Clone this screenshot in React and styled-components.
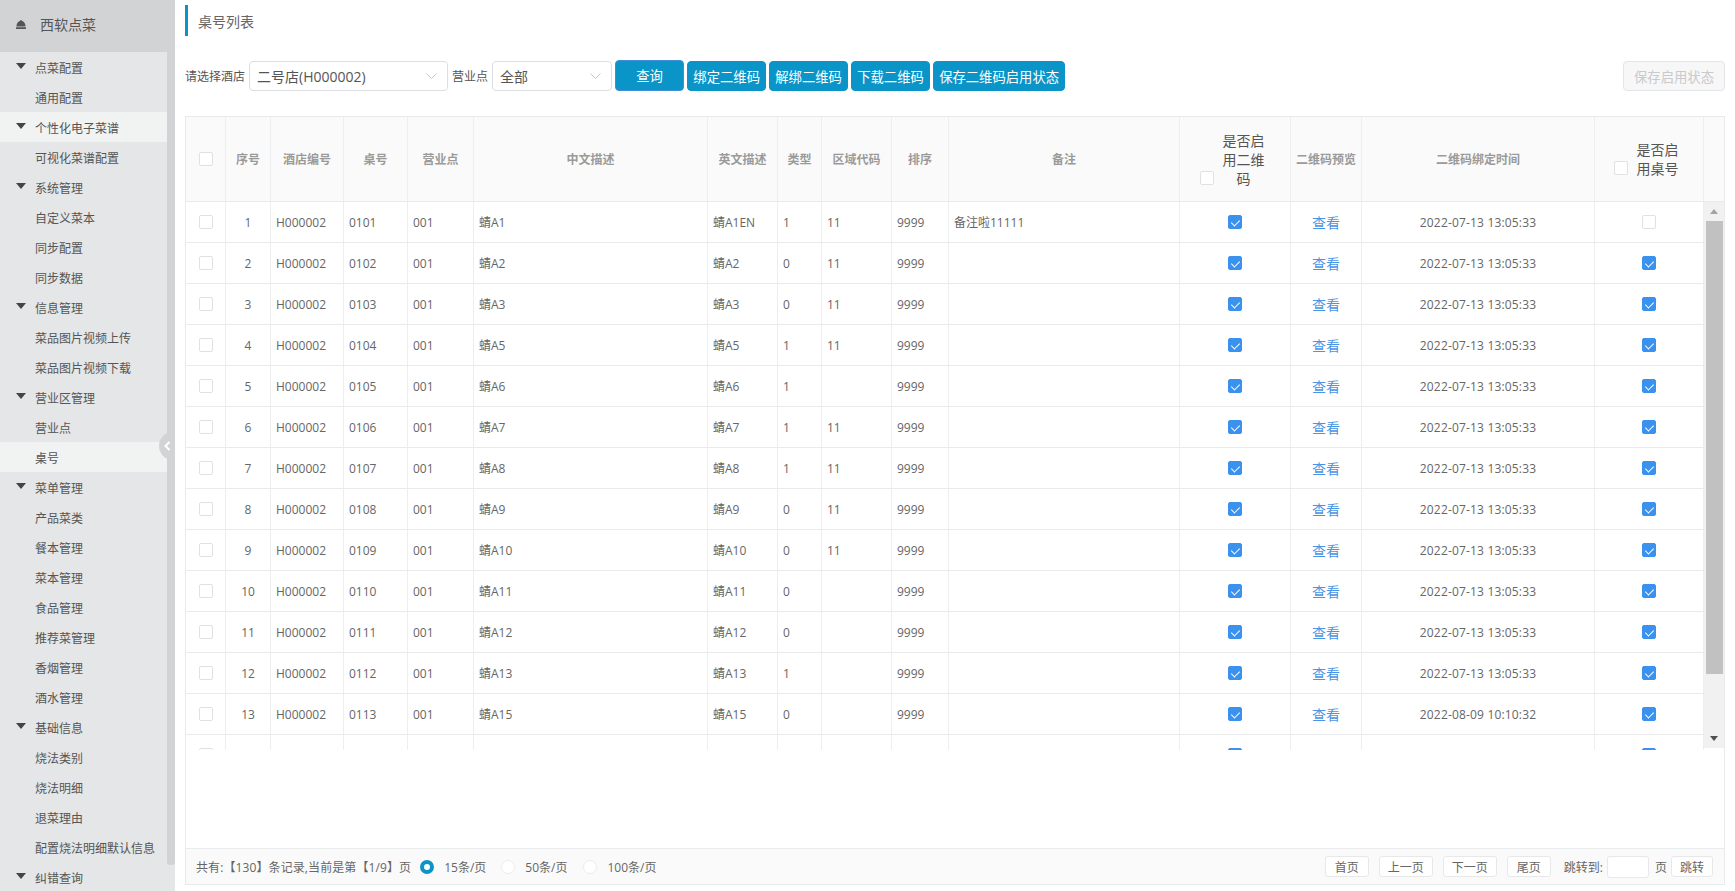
import React from "react";
import styled, { createGlobalStyle } from "styled-components";

const GlobalStyle = createGlobalStyle`
  html, body {
    margin: 0;
    padding: 0;
    background: #fff;
  }
  body {
    font-family: "Open Sans", "Noto Sans CJK SC", sans-serif;
    font-size: 12px;
    color: #666;
  }
  * {
    box-sizing: border-box;
  }
`;

const COLUMNS = "40px 45px 73px 64px 66px 234px 70px 44px 70px 57px 231px 111px 71px 233px 109px";
const BLUE = "#0a94c8";

const Page = styled.div`
  display: flex;
  width: 1735px;
  height: 891px;
  overflow: hidden;
`;

const Sidebar = styled.aside`
  position: relative;
  flex: none;
  width: 175px;
  background: #e4e6e7;
`;

const Brand = styled.div`
  display: flex;
  align-items: center;
  gap: 14px;
  height: 52px;
  padding: 0 0 4px 16px;
  background: #d2d3d5;
  font-size: 14px;
  color: #555;
`;

const MenuWrap = styled.div`
  display: flex;
  align-items: flex-start;
`;

const Menu = styled.ul`
  flex: none;
  width: 167px;
  margin: 0;
  padding: 0;
  list-style: none;
`;

const MenuThumb = styled.div`
  flex: none;
  width: 8px;
  height: 813px;
  background: #d2d3d5;
  border-radius: 0 0 3px 3px;
`;

const MenuItem = styled.li`
  display: flex;
  align-items: center;
  height: 30px;
  padding: 1px 0 0 ${(props) => (props.$group ? "16px" : "35px")};
  background: ${(props) => (props.$active ? "#f1f2f2" : "transparent")};
  color: #555;
  white-space: nowrap;
`;

const Caret = styled.span`
  flex: none;
  width: 0;
  height: 0;
  margin: -3px 9px 0 0;
  border-left: 5px solid transparent;
  border-right: 5px solid transparent;
  border-top: 6px solid #444;
`;

const Collapse = styled.div`
  position: absolute;
  left: 159px;
  top: 432px;
  display: flex;
  align-items: center;
  justify-content: center;
  width: 16px;
  height: 28px;
  background: #d2d3d5;
  border-radius: 14px 0 0 14px;
`;

const Main = styled.main`
  flex: 1;
  display: flex;
  flex-direction: column;
  min-width: 0;
  padding: 5px 10px 6px;
`;

const Title = styled.div`
  display: flex;
  align-items: center;
  height: 31px;
  padding-left: 10px;
  border-left: 3px solid ${BLUE};
  font-size: 14px;
  color: #666;
`;

const Toolbar = styled.div`
  display: flex;
  align-items: center;
  height: 30px;
  margin: 25px 0;
`;

const Label = styled.span`
  flex: none;
  margin-right: ${(props) => props.$gap}px;
  color: #555;
  white-space: nowrap;
`;

const Select = styled.div`
  flex: none;
  display: flex;
  align-items: center;
  justify-content: space-between;
  width: ${(props) => props.$width}px;
  height: 30px;
  margin-right: ${(props) => props.$gap}px;
  padding: 0 10px 1px 7px;
  border: 1px solid #dcdee2;
  border-radius: 4px;
  font-size: 14px;
  color: #555;
`;

const Button = styled.button`
  flex: none;
  height: 30px;
  margin-right: 3.3px;
  padding: 0 5px;
  width: ${(props) => (props.$width ? `${props.$width}px` : "auto")};
  border: 1px solid ${BLUE};
  border-radius: 4px;
  background: ${BLUE};
  color: #fff;
  font-family: inherit;
  font-size: 13.33px;
  white-space: nowrap;
`;

const QueryButton = styled(Button)`
  height: 31px;
  margin-top: -1px;
  border-color: #3d8fd8;
`;

const DisabledButton = styled(Button)`
  margin: 0 0 0 auto;
  padding: 0 10px;
  border-color: #e3e5e8;
  background: #f7f7f7;
  color: #c8cacd;
`;

const TableBox = styled.section`
  flex: 1;
  display: flex;
  flex-direction: column;
  min-height: 0;
  border: 1px solid #e8eaec;
`;

const HeadRow = styled.div`
  flex: none;
  display: grid;
  grid-template-columns: ${COLUMNS} 1fr;
  height: 85px;
  border-bottom: 1px solid #e8eaec;
  background: #fafafa;
`;

const HeadCell = styled.div`
  display: flex;
  align-items: center;
  justify-content: center;
  border-right: 1px solid #eceef0;
  font-weight: 700;
  color: #9a9a9a;
`;

const HeadCheckCell = styled.div`
  display: flex;
  align-items: flex-end;
  justify-content: center;
  gap: 9px;
  padding: 0 6px 0 0;
  border-right: 1px solid #eceef0;
`;

const HeadStack = styled.div`
  display: flex;
  align-items: flex-end;
  gap: 9px;
  margin: auto 0;
`;

const HeadText = styled.div`
  width: 42px;
  font-size: 14px;
  line-height: 19px;
  text-align: center;
  color: #555;
`;

const HeadCheck = styled.div`
  margin-bottom: 3px;
  line-height: 0;
`;

const Body = styled.div`
  flex: none;
  display: flex;
  height: 548px;
  overflow: hidden;
`;

const Rows = styled.div`
  flex: none;
  width: 1518px;
`;

const Row = styled.div`
  display: grid;
  grid-template-columns: ${COLUMNS};
  height: 41px;
  border-bottom: 1px solid #e8eaec;
`;

const Cell = styled.div`
  display: flex;
  align-items: center;
  justify-content: ${(props) => (props.$center ? "center" : "flex-start")};
  padding: ${(props) => (props.$center ? "0" : "0 0 0 5px")};
  border-right: 1px solid #eceef0;
  color: #666;
  white-space: nowrap;
`;

const DateText = styled.span`
  letter-spacing: 0.17px;
`;

const LinkText = styled.a`
  font-size: 14px;
  color: #4a94e4;
`;

const Checkbox = styled.span`
  position: relative;
  display: inline-block;
  width: 14px;
  height: 14px;
  border: 1px solid ${(props) => (props.$checked ? "#3b92ee" : "#dfe1e5")};
  border-radius: 2px;
  background: ${(props) => (props.$checked ? "#3b92ee" : "#fff")};

  &::after {
    content: "";
    display: ${(props) => (props.$checked ? "block" : "none")};
    position: absolute;
    left: 4px;
    top: 1.5px;
    width: 4px;
    height: 7px;
    border: solid #fff;
    border-width: 0 1px 1px 0;
    transform: rotate(45deg);
  }
`;

const ScrollTrack = styled.div`
  flex: none;
  position: relative;
  display: flex;
  flex-direction: column;
  align-items: center;
  width: 20px;
  height: 546px;
  background: #f1f1f1;
`;

const ScrollArrow = styled.span`
  flex: none;
  width: 0;
  height: 0;
  margin: ${(props) => (props.$down ? "auto 0 7px" : "7px 0 7px")};
  border-left: 4.5px solid transparent;
  border-right: 4.5px solid transparent;
  ${(props) =>
    props.$down ? "border-top: 5px solid #505050;" : "border-bottom: 5px solid #a3a3a3;"}
`;

const ScrollThumb = styled.div`
  flex: none;
  width: 17px;
  height: 453px;
  margin-left: 1px;
  background: #c1c1c1;
`;

const Spacer = styled.div`
  flex: 1;
`;

const Footer = styled.footer`
  flex: none;
  display: flex;
  align-items: center;
  height: 36px;
  padding: 0 11px 0 10px;
  border-top: 1px solid #e8eaec;
  background: #fafafa;
  white-space: nowrap;
`;

const FooterText = styled.span`
  letter-spacing: 0.1px;
`;

const RadioGroup = styled.label`
  display: flex;
  align-items: center;
  gap: 10px;
  margin-left: ${(props) => props.$gap}px;
`;

const Radio = styled.span`
  flex: none;
  width: 14px;
  height: 14px;
  border-radius: 50%;
  border: ${(props) => (props.$checked ? `4px solid ${BLUE}` : "1px solid #ececec")};
  background: #fff;
`;

const Pager = styled.div`
  display: flex;
  align-items: center;
  gap: 10px;
  margin-left: auto;
`;

const PageButton = styled.button`
  flex: none;
  width: ${(props) => props.$width}px;
  height: 21px;
  padding: 0;
  border: 1px solid #e8e8e8;
  border-radius: 3px;
  background: #fff;
  color: #666;
  font-family: inherit;
  font-size: 12px;
`;

const JumpGroup = styled.div`
  display: flex;
  align-items: center;
  gap: 4px;
  margin-left: 3px;
`;

const JumpInput = styled.input`
  width: 42px;
  height: 22px;
  margin-right: 2px;
  border: 1px solid #e8e8e8;
  border-radius: 3px;
  background: #fff;
`;

const MENU = [
  { label: "点菜配置", group: true },
  { label: "通用配置" },
  { label: "个性化电子菜谱", group: true, active: true },
  { label: "可视化菜谱配置" },
  { label: "系统管理", group: true },
  { label: "自定义菜本" },
  { label: "同步配置" },
  { label: "同步数据" },
  { label: "信息管理", group: true },
  { label: "菜品图片视频上传" },
  { label: "菜品图片视频下载" },
  { label: "营业区管理", group: true },
  { label: "营业点" },
  { label: "桌号", active: true },
  { label: "菜单管理", group: true },
  { label: "产品菜类" },
  { label: "餐本管理" },
  { label: "菜本管理" },
  { label: "食品管理" },
  { label: "推荐菜管理" },
  { label: "香烟管理" },
  { label: "酒水管理" },
  { label: "基础信息", group: true },
  { label: "烧法类别" },
  { label: "烧法明细" },
  { label: "退菜理由" },
  { label: "配置烧法明细默认信息" },
  { label: "纠错查询", group: true },
];

const HEAD = ["序号", "酒店编号", "桌号", "营业点", "中文描述", "英文描述", "类型", "区域代码", "排序", "备注"];

const DATE = "2022-07-13 13:05:33";
const ROWS = [
  ["0101", "蜻A1", "蜻A1EN", "1", "11", "备注啦11111", DATE, false],
  ["0102", "蜻A2", "蜻A2", "0", "11", "", DATE, true],
  ["0103", "蜻A3", "蜻A3", "0", "11", "", DATE, true],
  ["0104", "蜻A5", "蜻A5", "1", "11", "", DATE, true],
  ["0105", "蜻A6", "蜻A6", "1", "", "", DATE, true],
  ["0106", "蜻A7", "蜻A7", "1", "11", "", DATE, true],
  ["0107", "蜻A8", "蜻A8", "1", "11", "", DATE, true],
  ["0108", "蜻A9", "蜻A9", "0", "11", "", DATE, true],
  ["0109", "蜻A10", "蜻A10", "0", "11", "", DATE, true],
  ["0110", "蜻A11", "蜻A11", "0", "", "", DATE, true],
  ["0111", "蜻A12", "蜻A12", "0", "", "", DATE, true],
  ["0112", "蜻A13", "蜻A13", "1", "", "", DATE, true],
  ["0113", "蜻A15", "蜻A15", "0", "", "", "2022-08-09 10:10:32", true],
];

const SelectArrow = () => (
  <svg width="11" height="6" viewBox="0 0 11 6" fill="none" stroke="#c5c8ce" strokeWidth="1">
    <path d="M.5.5l5 5 5-5" />
  </svg>
);

const App = () => {
  return (
    <Page>
      <GlobalStyle />
      <Sidebar>
        <Brand>
          <svg width="10" height="9" viewBox="0 0 10 9" fill="#555">
            <path d="M5 0c.5 0 .8.3.8.8C8 1.200 9.500 3.500 9.500 6.500H.5C.5 3.500 2 1.200 4.200.8 4.200.3 4.500 0 5 0zM0 7.200h10V9H0z" />
          </svg>
          西软点菜
        </Brand>
        <MenuWrap>
          <Menu>
            {MENU.map((item) => (
              <MenuItem key={item.label} $group={item.group} $active={item.active}>
                {item.group && <Caret />}
                {item.label}
              </MenuItem>
            ))}
          </Menu>
          <MenuThumb />
        </MenuWrap>
        <Collapse>
          <svg width="7" height="10" viewBox="0 0 7 10" fill="none" stroke="#fff" strokeWidth="2">
            <path d="M5.500 1l-4 4 4 4" />
          </svg>
        </Collapse>
      </Sidebar>
      <Main>
        <Title>桌号列表</Title>
        <Toolbar>
          <Label $gap={4}>请选择酒店</Label>
          <Select $width={199} $gap={4}>
            二号店(H000002)
            <SelectArrow />
          </Select>
          <Label $gap={4}>营业点</Label>
          <Select $width={120} $gap={3}>
            全部
            <SelectArrow />
          </Select>
          <QueryButton $width={69}>查询</QueryButton>
          <Button>绑定二维码</Button>
          <Button>解绑二维码</Button>
          <Button>下载二维码</Button>
          <Button>保存二维码启用状态</Button>
          <DisabledButton>保存启用状态</DisabledButton>
        </Toolbar>
        <TableBox>
          <HeadRow>
            <HeadCell>
              <Checkbox />
            </HeadCell>
            {HEAD.map((title) => (
              <HeadCell key={title}>{title}</HeadCell>
            ))}
            <HeadCheckCell>
              <HeadStack>
                <HeadCheck>
                  <Checkbox />
                </HeadCheck>
                <HeadText>是否启用二维码</HeadText>
              </HeadStack>
            </HeadCheckCell>
            <HeadCell>二维码预览</HeadCell>
            <HeadCell>二维码绑定时间</HeadCell>
            <HeadCheckCell>
              <HeadStack>
                <HeadCheck>
                  <Checkbox />
                </HeadCheck>
                <HeadText>是否启用桌号</HeadText>
              </HeadStack>
            </HeadCheckCell>
          </HeadRow>
          <Body>
            <Rows>
              {ROWS.map((row, index) => (
                <Row key={row[0]}>
                  <Cell $center>
                    <Checkbox />
                  </Cell>
                  <Cell $center>{index + 1}</Cell>
                  <Cell>H000002</Cell>
                  <Cell>{row[0]}</Cell>
                  <Cell>001</Cell>
                  <Cell>{row[1]}</Cell>
                  <Cell>{row[2]}</Cell>
                  <Cell>{row[3]}</Cell>
                  <Cell>{row[4]}</Cell>
                  <Cell>9999</Cell>
                  <Cell>{row[5]}</Cell>
                  <Cell $center>
                    <Checkbox $checked />
                  </Cell>
                  <Cell $center>
                    <LinkText>查看</LinkText>
                  </Cell>
                  <Cell $center>
                    <DateText>{row[6]}</DateText>
                  </Cell>
                  <Cell $center>
                    <Checkbox $checked={row[7]} />
                  </Cell>
                </Row>
              ))}
              <Row>
                <Cell $center>
                  <Checkbox />
                </Cell>
                <Cell />
                <Cell />
                <Cell />
                <Cell />
                <Cell />
                <Cell />
                <Cell />
                <Cell />
                <Cell />
                <Cell />
                <Cell $center>
                  <Checkbox $checked />
                </Cell>
                <Cell />
                <Cell />
                <Cell $center>
                  <Checkbox $checked />
                </Cell>
              </Row>
            </Rows>
            <ScrollTrack>
              <ScrollArrow />
              <ScrollThumb />
              <ScrollArrow $down />
            </ScrollTrack>
          </Body>
          <Spacer />
          <Footer>
            <FooterText>共有:【130】条记录,当前是第【1/9】页</FooterText>
            <RadioGroup $gap={9}>
              <Radio $checked />
              15条/页
            </RadioGroup>
            <RadioGroup $gap={15}>
              <Radio />
              50条/页
            </RadioGroup>
            <RadioGroup $gap={16}>
              <Radio />
              100条/页
            </RadioGroup>
            <Pager>
              <PageButton $width={44}>首页</PageButton>
              <PageButton $width={54}>上一页</PageButton>
              <PageButton $width={54}>下一页</PageButton>
              <PageButton $width={44}>尾页</PageButton>
              <JumpGroup>
                跳转到:
                <JumpInput />
                页
                <PageButton $width={42}>跳转</PageButton>
              </JumpGroup>
            </Pager>
          </Footer>
        </TableBox>
      </Main>
    </Page>
  );
};

export default App;
